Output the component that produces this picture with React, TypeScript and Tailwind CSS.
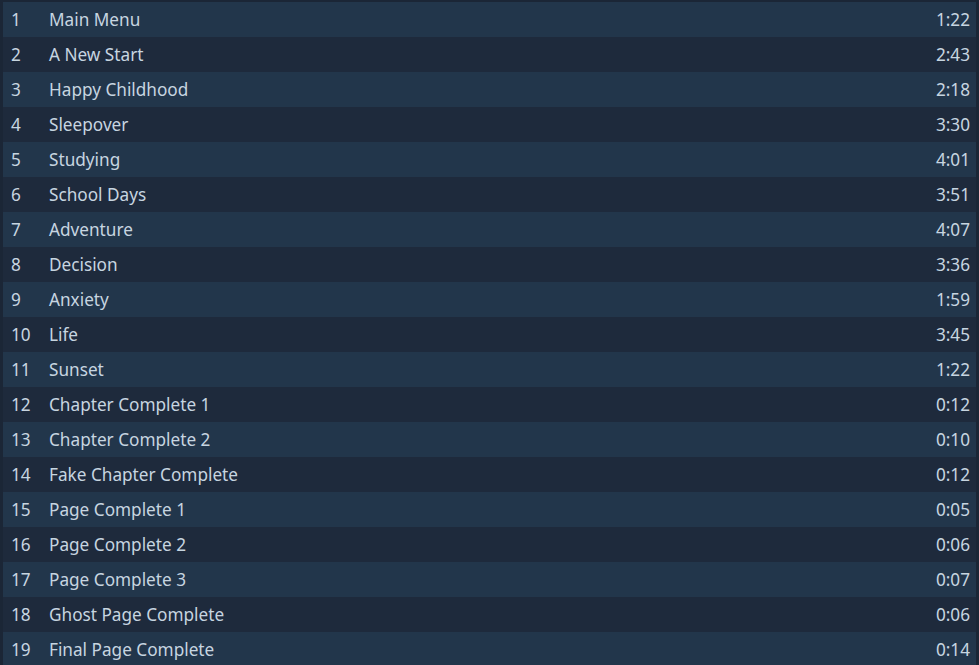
const tracks: [string, string][] = [
  ["Main Menu", "1:22"],
  ["A New Start", "2:43"],
  ["Happy Childhood", "2:18"],
  ["Sleepover", "3:30"],
  ["Studying", "4:01"],
  ["School Days", "3:51"],
  ["Adventure", "4:07"],
  ["Decision", "3:36"],
  ["Anxiety", "1:59"],
  ["Life", "3:45"],
  ["Sunset", "1:22"],
  ["Chapter Complete 1", "0:12"],
  ["Chapter Complete 2", "0:10"],
  ["Fake Chapter Complete", "0:12"],
  ["Page Complete 1", "0:05"],
  ["Page Complete 2", "0:06"],
  ["Page Complete 3", "0:07"],
  ["Ghost Page Complete", "0:06"],
  ["Final Page Complete", "0:14"],
];

export default function App() {
  return (
    <div
      className="w-[979px] h-[665px] overflow-hidden bg-[#1b2636] pt-[2px] pl-[3px] pr-[3px] text-[17.2px] text-[#c7d5e0]"
      style={{ fontFamily: '"Noto Sans", "Open Sans", sans-serif' }}
    >
      {tracks.map(([title, dur], i) => (
        <div
          key={i}
          className={`flex items-center h-[35px] pl-[8px] pr-[6px] ${i % 2 === 0 ? "bg-[#22364b]" : "bg-[#1e2a3c]"}`}
        >
          <span className="w-[38px] shrink-0">{i + 1}</span>
          <span className="flex-1">{title}</span>
          <span>{dur}</span>
        </div>
      ))}
    </div>
  );
}
